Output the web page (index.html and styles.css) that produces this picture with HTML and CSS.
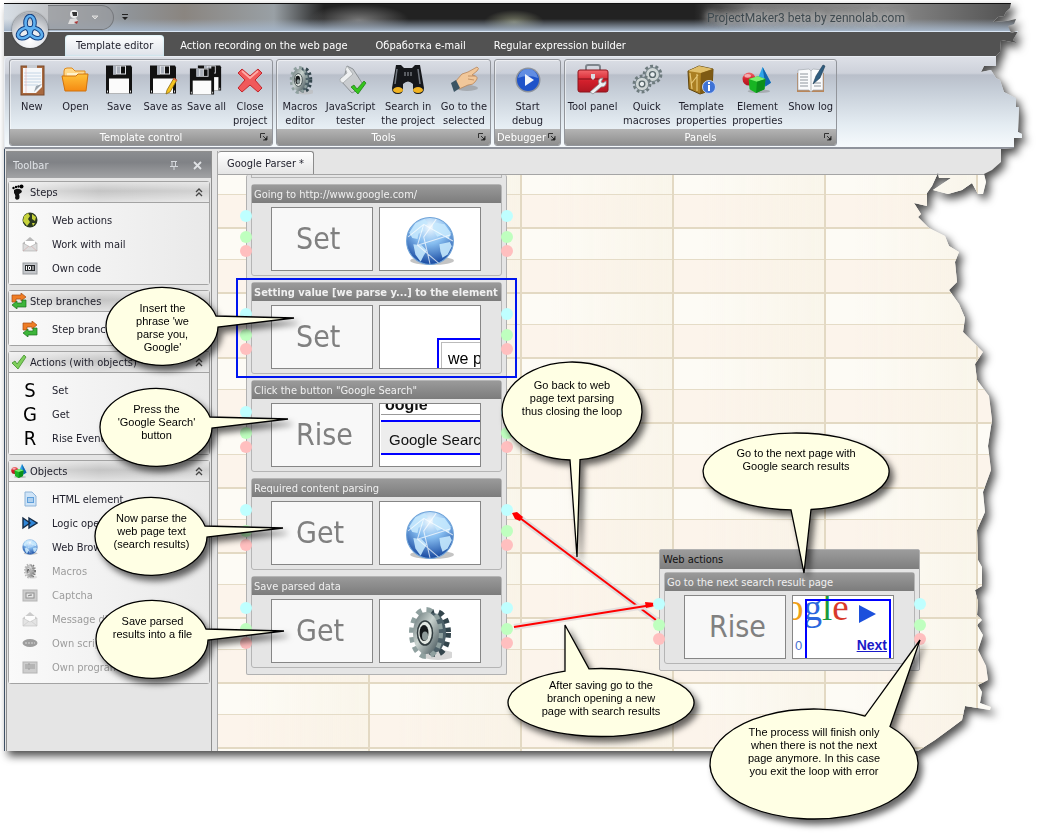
FILE: index.html
```html
<!DOCTYPE html>
<html lang="en">
  <head>
    <meta charset="UTF-8" />
    <meta name="viewport" content="width=device-width, initial-scale=1.0" />
    <title>ProjectMaker3 beta by zennolab.com</title>
    <link rel="stylesheet" href="styles.css">
  </head>
  <body>
    <!-- shared icons -->
    <svg class="defs" width="0" height="0" aria-hidden="true">
      <defs>
        <radialGradient id="globeFill" cx="50%" cy="20%" r="80%">
          <stop offset="0" stop-color="#f2faff" />
          <stop offset="0.45" stop-color="#86bdf0" />
          <stop offset="1" stop-color="#1748a0" />
        </radialGradient>
        <linearGradient id="gearFill" x1="0" y1="0" x2="1" y2="1">
          <stop offset="0" stop-color="#5d6d70" />
          <stop offset="0.45" stop-color="#c9d3cf" />
          <stop offset="1" stop-color="#39494f" />
        </linearGradient>
        <linearGradient id="redFill" x1="0" y1="0" x2="0" y2="1">
          <stop offset="0" stop-color="#f2686c" />
          <stop offset="0.5" stop-color="#d3202c" />
          <stop offset="1" stop-color="#b01722" />
        </linearGradient>
        <linearGradient id="orangeFill" x1="0" y1="0" x2="0" y2="1">
          <stop offset="0" stop-color="#ffc23a" />
          <stop offset="1" stop-color="#f58a12" />
        </linearGradient>
        <symbol id="globe" viewBox="0 0 48 48">
          <ellipse cx="26" cy="43" rx="21" ry="4" fill="#8a8a8a" opacity=".5" />
          <circle cx="24" cy="24" r="22.5" fill="url(#globeFill)" stroke="#6fa3d8" stroke-width="1" />
          <path d="M4 16 L10 7 L19 3 L22 7 L17 10 L19 14 L13 17 L12 22 L7 21 Z M8 27 L16 28 L21 33 L18 38 L15 44 L10 37 Z M27 6 L38 8 L44 16 L42 22 L36 18 L31 20 L27 14 Z M33 27 L43 25 L45 29 L41 37 L36 40 L34 34 Z" fill="#c5e8fd" opacity=".9" />
          <path d="M3 20 L18 8 L46 24 M18 8 L12 28 L32 45 M12 28 L44 18 M30 3 L18 20 L24 46" fill="none" stroke="#fff" stroke-width="1" opacity=".7" />
        </symbol>
        <symbol id="gear" viewBox="0 0 44 56">
          <ellipse cx="30" cy="50" rx="17" ry="5" fill="#bbb" opacity=".6" />
          <g stroke="#33454c" stroke-width="8" stroke-dasharray="4.5 4" fill="none">
            <ellipse cx="28" cy="28" rx="11" ry="20" />
          </g>
          <ellipse cx="25" cy="28" rx="13" ry="20" fill="#4d6068" />
          <g stroke="#8fa09f" stroke-width="8" stroke-dasharray="5 4.3" fill="none">
            <ellipse cx="18" cy="28" rx="13" ry="22" />
          </g>
          <ellipse cx="18" cy="28" rx="13" ry="21" fill="url(#gearFill)" />
          <ellipse cx="17" cy="28" rx="7.5" ry="12" fill="#e2e8e3" stroke="#303b3e" stroke-width="1.5" />
          <ellipse cx="16" cy="28" rx="4.5" ry="8" fill="#15191b" />
          <ellipse cx="17" cy="31" rx="3" ry="4.5" fill="#8d9a99" />
        </symbol>
        <symbol id="cog" viewBox="0 0 20 20">
          <circle cx="10" cy="10" r="7.4" fill="none" stroke="#6e7b7e" stroke-width="4" stroke-dasharray="2.6 2.05" />
          <circle cx="10" cy="10" r="6.6" fill="#cfd6d6" stroke="#77858a" stroke-width="1" />
          <circle cx="10" cy="10" r="2.8" fill="#e9eef0" stroke="#58666a" stroke-width="1.3" />
        </symbol>
        <symbol id="floppy" viewBox="0 0 28 30">
          <path d="M1 1 H26 L27 3 V29 H1 Z" fill="#111" />
          <path d="M8 1 H21 V10 H8 Z" fill="#dfe1e6" />
          <path d="M8 1 H11 V10 H8 Z M12 2 h3 v7 h-3 z" fill="#aab0ba" />
          <rect x="16" y="2" width="4" height="7" fill="#111" />
          <rect x="4" y="14" width="20" height="15" fill="#fbfbfb" />
          <rect x="2" y="26" width="1" height="2" fill="#ddd" />
          <rect x="25" y="26" width="1" height="2" fill="#ddd" />
        </symbol>
        <symbol id="shapes" viewBox="0 0 32 30">
          <ellipse cx="18" cy="27" rx="12" ry="2" fill="#777" opacity=".4" />
          <path d="M22 1 L31 18 L25 22 L15 18 Z" fill="#2fa5e8" />
          <path d="M22 1 L31 18 L25 22 Z" fill="#1265ae" />
          <circle cx="7.500" cy="14" r="7" fill="url(#redFill)" />
          <ellipse cx="6" cy="10.500" rx="3.500" ry="2" fill="#fff" opacity=".55" />
          <path d="M7 14 L17 11 L25 14 L24 25 L15 29 L8 25 Z" fill="#18b523" />
          <path d="M7 14 L17 11 L25 14 L16 17 Z" fill="#7bee6d" />
          <path d="M16 17 L25 14 L24 25 L15 29 Z" fill="#0c8f1a" />
        </symbol>
        <symbol id="launcher" viewBox="0 0 8 8">
          <path d="M0.500 5 V0.500 H5 M3 3 L6 6 M7 3 V7 H3" fill="none" stroke="#333" stroke-width="1" />
          <path d="M7 4 V7 H4 Z" fill="#222" />
        </symbol>
        <symbol id="branches" viewBox="0 0 16 16">
          <path d="M1 9 V2 H10 V0 L15 4 L10 8 V6 H5 V9 Z" fill="#ef7d25" stroke="#a74c12" stroke-width=".7" />
          <path d="M15 7 V14 H6 V16 L1 12 L6 8 V10 H11 V7 Z" fill="#3db53a" stroke="#1b6e1c" stroke-width=".7" />
        </symbol>
        <symbol id="chevrons" viewBox="0 0 8 9">
          <path d="M1 4 L4 1 L7 4 M1 8 L4 5 L7 8" fill="none" stroke="#444" stroke-width="1.300" />
        </symbol>
        <symbol id="envelope" viewBox="0 0 16 16">
          <path d="M1 7 L8 1 L15 7 V15 H1 Z" fill="#b9b9b9" />
          <path d="M3 5 H13 V11 H3 Z" fill="#fff" />
          <path d="M1 7 L8 11 L15 7 V15 H1 Z" fill="#dcdcdc" stroke="#a9a9a9" stroke-width=".6" />
          <path d="M1 15 L7 10 M15 15 L9 10" stroke="#d2a9a9" stroke-width=".6" />
        </symbol>
      </defs>
    </svg>

    <div class="sheet">
      <div class="torn-shadow">
        <div class="torn">
          <div class="window">
            <header class="titlebar">
              <div class="quick-access">
                <svg width="14" height="15" viewBox="0 0 14 15"><circle cx="7" cy="4" r="4" fill="#eee" /><path d="M5 2 h5 v4 h-4z" fill="#333" /><path d="M3 9 L9 8 L11 11 L7 14 H1 Z" fill="#ddd" /><path d="M7 12 L11 11 L10 14 Z" fill="#a33" /></svg>
                <svg width="8" height="5" viewBox="0 0 8 5"><path d="M1 1 H7 L4 4 Z" fill="#bbb" stroke="#ddd" /></svg>
              </div>
              <svg class="qa-more" width="6" height="7" viewBox="0 0 6 7"><path d="M0 0 H6 V1 H0 Z M0 3 H6 L3 6 Z" fill="#222" /></svg>
              <span class="app-title">ProjectMaker3 beta by zennolab.com</span>
            </header>
            <button class="orb" aria-label="Application menu">
              <svg width="30" height="30" viewBox="0 0 30 30">
                <g fill="none" stroke="#123f80" stroke-width="4.600">
                  <ellipse cx="15" cy="9" rx="4.500" ry="7" />
                  <ellipse cx="9.500" cy="19" rx="4.500" ry="7" transform="rotate(60 9.500 19)" />
                  <ellipse cx="20.500" cy="19" rx="4.500" ry="7" transform="rotate(-60 20.500 19)" />
                </g>
                <g fill="none" stroke="#5fb0f0" stroke-width="2.600">
                  <ellipse cx="15" cy="9" rx="4.500" ry="7" />
                  <ellipse cx="9.500" cy="19" rx="4.500" ry="7" transform="rotate(60 9.500 19)" />
                  <ellipse cx="20.500" cy="19" rx="4.500" ry="7" transform="rotate(-60 20.500 19)" />
                </g>
              </svg>
            </button>

            <nav class="tabs">
              <button class="tab active">Template editor</button>
              <button class="tab">Action recording on the web page</button>
              <button class="tab" lang="ru">Обработка e-mail</button>
              <button class="tab">Regular expression builder</button>
            </nav>

            <div class="ribbon">
              <section class="ribbon-group group-template">
                <div class="ribbon-buttons">
                  <button class="ribbon-btn">
                    <svg width="32" height="32" viewBox="0 0 32 32"><rect x="5" y="2" width="23" height="29" fill="#a9693f" stroke="#7b4a2b" /><path d="M7 4 H26 V23 L20 29 H7 Z" fill="#f6f8fa" /><path d="M8 9 H25 M8 12 H25 M8 15 H25 M8 18 H25 M8 21 H22" stroke="#b9cbe0" stroke-width=".8" /><path d="M10 4 V29" stroke="#e7b0b0" stroke-width=".6" /><path d="M26 20 L18 28 L20 22 Z" fill="#9aa4ad" /><rect x="11" y="1" width="10" height="3" fill="#c8ccd2" /></svg>
                    <span>New</span>
                  </button>
                  <button class="ribbon-btn">
                    <svg width="32" height="32" viewBox="0 0 32 32"><path d="M5 7 Q5 4 8 4 H13 L16 7 H26 V16 H5 Z" fill="#ffd98a" stroke="#df8a1d" /><path d="M8 9 H24 V15 H8 Z" fill="#fff2c9" /><path d="M3 12 H17 L19 10 H29 L27 27 H6 Z" fill="url(#orangeFill)" stroke="#d0720d" /></svg>
                    <span>Open</span>
                  </button>
                  <button class="ribbon-btn">
                    <svg width="32" height="32" viewBox="0 0 32 32"><use href="#floppy" x="2" y="0" width="28" height="31" /></svg>
                    <span>Save</span>
                  </button>
                  <button class="ribbon-btn">
                    <svg width="32" height="32" viewBox="0 0 32 32"><use href="#floppy" x="2" y="0" width="28" height="31" /><path d="M19 30 L20 26 L27 14 L30 16 L23 28 Z" fill="#f7c51f" stroke="#8a6a10" stroke-width=".8" /><path d="M27 14 L30 16 L29 17 L26 15 Z" fill="#e06060" /></svg>
                    <span>Save as</span>
                  </button>
                  <button class="ribbon-btn">
                    <svg width="34" height="32" viewBox="0 0 34 32"><use href="#floppy" x="8" y="0" width="25" height="28" /><use href="#floppy" x="0" y="3" width="26" height="29" /></svg>
                    <span>Save all</span>
                  </button>
                  <button class="ribbon-btn">
                    <svg width="32" height="32" viewBox="0 0 32 32"><path d="M8 5 L16 12 L24 5 L28 9 L21 16 L28 24 L24 28 L16 21 L8 28 L4 24 L11 16 L4 9 Z" fill="#f0595b" stroke="#c3262d" stroke-linejoin="round" /><path d="M8 7 L16 14 L24 7" stroke="#ffa9a5" stroke-width="2" fill="none" /></svg>
                    <span>Close<br>project</span>
                  </button>
                </div>
                <div class="ribbon-caption">Template control<svg width="8" height="8"><use href="#launcher" /></svg></div>
              </section>

              <section class="ribbon-group group-tools">
                <div class="ribbon-buttons">
                  <button class="ribbon-btn">
                    <svg width="32" height="32" viewBox="0 0 32 32"><use href="#gear" x="5" y="1" width="24" height="30" /></svg>
                    <span>Macros<br>editor</span>
                  </button>
                  <button class="ribbon-btn">
                    <svg width="32" height="32" viewBox="0 0 32 32"><path d="M12 2 L18 5 L29 22 L17 29 L6 17 Q4 13 9 14 Z" fill="#c9cccf" stroke="#8c9195" /><path d="M12 2 Q9 5 12 9 L5 15 Q4 18 8 19 L18 10 Z" fill="#eef0f1" stroke="#9b9fa2" stroke-width=".7" /><path d="M16 23 L19 21 L22 25 L29 17 L31 19 L23 30 Z" fill="#35c41c" stroke="#1a7d10" stroke-width=".7" /></svg>
                    <span>JavaScript<br>tester</span>
                  </button>
                  <button class="ribbon-btn">
                    <svg width="34" height="32" viewBox="0 0 34 32"><path d="M5 1 H10 L13 4 H21 L24 1 H29 L33 24 Q33 30 27 30 Q22 30 22 25 V20 Q17 15 12 20 V25 Q12 30 7 30 Q1 30 1 24 Z" fill="#15171b" /><path d="M6 5 L4 20 M27 5 L29 20" stroke="#71777f" stroke-width="1.500" /><path d="M14 8 v4 M17 8 v4 M20 8 v4" stroke="#9ca1a8" /><ellipse cx="7" cy="26" rx="5" ry="3" fill="#f0b323" /><ellipse cx="27" cy="26" rx="5" ry="3" fill="#f0b323" /></svg>
                    <span>Search in<br>the project</span>
                  </button>
                  <button class="ribbon-btn">
                    <svg width="32" height="32" viewBox="0 0 32 32"><ellipse cx="19" cy="24" rx="11" ry="3" fill="#777" opacity=".4" /><path d="M7 18 L14 10 L20 8 L29 3 Q32 4 29 7 L24 11 Q30 12 29 15 L27 18 Q25 21 20 21 L11 25 Z" fill="#f1c79a" stroke="#b9875a" stroke-width=".8" /><path d="M20 12 L27 12 M20 15 L26 16" stroke="#b9875a" stroke-width=".8" /><path d="M3 19 L8 16 L12 24 L6 28 Z" fill="#3c5564" /></svg>
                    <span>Go to the<br>selected</span>
                  </button>
                </div>
                <div class="ribbon-caption">Tools<svg width="8" height="8"><use href="#launcher" /></svg></div>
              </section>

              <section class="ribbon-group group-debugger">
                <div class="ribbon-buttons">
                  <button class="ribbon-btn">
                    <svg width="32" height="32" viewBox="0 0 32 32"><circle cx="16" cy="16" r="12.500" fill="#8d939c" /><circle cx="16" cy="16" r="11" fill="#1f53c9" /><path d="M6 14 Q8 5 16 5 Q24 5 26 14 Q16 10 6 14 Z" fill="#7ea6ee" opacity=".7" /><path d="M13 10 L22 16 L13 22 Z" fill="#f3f6fb" /></svg>
                    <span>Start<br>debug</span>
                  </button>
                </div>
                <div class="ribbon-caption">Debugger<svg width="8" height="8"><use href="#launcher" /></svg></div>
              </section>

              <section class="ribbon-group group-panels">
                <div class="ribbon-buttons">
                  <button class="ribbon-btn">
                    <svg width="32" height="32" viewBox="0 0 32 32"><path d="M9 6 V3 Q9 1 11 1 H21 Q23 1 23 3 V6" fill="none" stroke="#7f868d" stroke-width="2" /><rect x="1" y="6" width="30" height="22" rx="2" fill="url(#redFill)" stroke="#8d141d" /><path d="M1 15 H31" stroke="#7d1119" /><path d="M14 10 H18 V14 L16 16 L14 14 Z" fill="#d8dbe0" /><path d="M13 28 L22 20 Q20 14 26 14 L24 18 L26 19 L29 17 Q30 23 24 23 L16 30 Z" fill="#eff1f3" stroke="#8a9096" stroke-width=".8" /></svg>
                    <span>Tool panel</span>
                  </button>
                  <button class="ribbon-btn">
                    <svg width="32" height="32" viewBox="0 0 32 32"><use href="#cog" x="11" y="0" width="21" height="21" /><use href="#cog" x="1" y="10" width="20" height="20" /></svg>
                    <span>Quick<br>macroses</span>
                  </button>
                  <button class="ribbon-btn">
                    <svg width="32" height="32" viewBox="0 0 32 32"><path d="M3 7 L14 2 L28 5 L27 26 L15 30 L4 25 Z" fill="#ab7f22" stroke="#5d430d" /><path d="M3 7 L14 2 L28 5 L16 9 Z" fill="#e0bf6c" /><path d="M16 9 L28 5 L27 26 L15 30 Z" fill="#7e5a14" /><path d="M5 9 L7 25 M12 10 L12 27 M6 20 L13 11" stroke="#e5c676" stroke-width="1.200" /><circle cx="24" cy="23" r="6.500" fill="#3e72d6" stroke="#c3d3f2" /><path d="M24 21 V27 M24 18 V20" stroke="#fff" stroke-width="2" /></svg>
                    <span>Template<br>properties</span>
                  </button>
                  <button class="ribbon-btn">
                    <svg width="32" height="32"><use href="#shapes" x="1" y="2" width="30" height="28" /></svg>
                    <span>Element<br>properties</span>
                  </button>
                  <button class="ribbon-btn">
                    <svg width="32" height="32" viewBox="0 0 32 32"><path d="M2 9 H29 V28 H2 Z" fill="#b8865a" /><path d="M3 6 L14 5 L16 7 L18 5 L28 6 V26 H18 L16 28 L14 26 H3 Z" fill="#fafbfc" stroke="#a5abb2" stroke-width=".7" /><path d="M5 10 H13 M5 13 H13 M5 16 H13 M5 19 H13 M5 22 H13 M19 19 H26 M19 22 H26" stroke="#8e959c" /><path d="M16 7 V27" stroke="#b5bac0" /><path d="M18 20 L21 12 L28 1 L30 2 L25 14 Z" fill="#2f5d80" stroke="#1d3b52" stroke-width=".6" /></svg>
                    <span>Show log</span>
                  </button>
                </div>
                <div class="ribbon-caption">Panels<svg width="8" height="8"><use href="#launcher" /></svg></div>
              </section>
            </div>

            <div class="workspace">
              <aside class="sidebar">
                <div class="sidebar-title">
                  <span>Toolbar</span>
                  <svg width="8" height="9" viewBox="0 0 8 9"><path d="M1 .5 H7 M2 0 V5 M5.500 0 V5 M0 5.500 H8 M4 5 V9" stroke="#d5d8dc" fill="none" /></svg>
                  <svg width="9" height="9" viewBox="0 0 9 9"><path d="M1 1 L8 8 M8 1 L1 8" stroke="#e0e2e5" stroke-width="1.800" /></svg>
                </div>

                <section class="tool-group">
                  <h2 class="tool-head">
                    <svg width="16" height="16" viewBox="0 0 16 16"><path d="M3 6 Q8 3 11 7 Q11 9 8 10 Q9 13 8 15 Q5 17 4 14 Q5 11 3 9 Z" fill="#111" /><circle cx="2.500" cy="4" r="1.200" /><circle cx="5" cy="3" r="1.200" /><circle cx="7.500" cy="2.500" r="1.200" /><circle cx="10.500" cy="2.500" r="2" /></svg>
                    <span>Steps</span>
                    <svg class="fold" width="8" height="9"><use href="#chevrons" /></svg>
                  </h2>
                  <div class="tool-list">
                    <button class="tool"><svg width="16" height="16" viewBox="0 0 16 16"><circle cx="8" cy="8" r="7.500" fill="#2b3a22" /><path d="M2 4 L6 1 L8 4 L6 7 L8 10 L5 14 L1 9 Z M10 2 L14 5 L13 9 L10 7 Z M10 11 L13 11 L11 14 Z" fill="#c7d33c" /></svg>Web actions</button>
                    <button class="tool"><svg width="16" height="16"><use href="#envelope" /></svg>Work with mail</button>
                    <button class="tool"><svg width="16" height="16" viewBox="0 0 16 16"><rect x="1" y="3" width="14" height="11" fill="#c3c6ca" stroke="#9a9da1" /><rect x="3" y="5" width="10" height="6" fill="#26292c" /><path d="M4.500 6 v4 M6.500 6.500 h2 v3 h-2 z M11 6 v4" stroke="#fff" fill="none" /></svg>Own code</button>
                  </div>
                </section>

                <section class="tool-group">
                  <h2 class="tool-head">
                    <svg width="16" height="16"><use href="#branches" /></svg>
                    <span>Step branches</span>
                    <svg class="fold" width="8" height="9"><use href="#chevrons" /></svg>
                  </h2>
                  <div class="tool-list">
                    <button class="tool"><svg width="16" height="16"><use href="#branches" /></svg>Step branch</button>
                  </div>
                </section>

                <section class="tool-group">
                  <h2 class="tool-head">
                    <svg width="16" height="16" viewBox="0 0 16 16"><path d="M1 9 L4 7 L6 10 L13 1 L15 3 L7 15 Z" fill="#7fcf5c" stroke="#3f8f2b" stroke-width=".8" /></svg>
                    <span>Actions (with objects)</span>
                    <svg class="fold" width="8" height="9"><use href="#chevrons" /></svg>
                  </h2>
                  <div class="tool-list">
                    <button class="tool"><b class="letter">S</b>Set</button>
                    <button class="tool"><b class="letter">G</b>Get</button>
                    <button class="tool"><b class="letter">R</b>Rise Event</button>
                  </div>
                </section>

                <section class="tool-group">
                  <h2 class="tool-head">
                    <svg width="16" height="16"><use href="#shapes" /></svg>
                    <span>Objects</span>
                    <svg class="fold" width="8" height="9"><use href="#chevrons" /></svg>
                  </h2>
                  <div class="tool-list">
                    <button class="tool"><svg width="16" height="16" viewBox="0 0 16 16"><path d="M3 1 H10 L14 5 V15 H3 Z" fill="#cfe4f7" stroke="#8fb4d8" /><rect x="5" y="6" width="7" height="6" fill="#5f9fdb" /><path d="M6 8 h5 M6 10 h5" stroke="#fff" /></svg>HTML element</button>
                    <button class="tool"><svg width="16" height="16" viewBox="0 0 16 16"><path d="M1 3 L8 8 L1 13 Z M7 3 L15 8 L7 13 Z" fill="#2f86d8" stroke="#152b45" stroke-width="1.400" /></svg>Logic operation</button>
                    <button class="tool"><svg width="16" height="16"><use href="#globe" /></svg>Web Browser</button>
                    <button class="tool" disabled><svg width="16" height="16"><use href="#gear" /></svg>Macros</button>
                    <button class="tool" disabled><svg width="16" height="16" viewBox="0 0 16 16"><rect x="1" y="3" width="14" height="11" fill="#bbb" stroke="#999" /><rect x="4" y="6" width="8" height="5" fill="#ddd" stroke="#666" /><path d="M6 9 L8 8 L10 8" stroke="#555" /></svg>Captcha</button>
                    <button class="tool" disabled><svg width="16" height="16"><use href="#envelope" /></svg>Message dialog</button>
                    <button class="tool" disabled><svg width="16" height="16" viewBox="0 0 16 16"><ellipse cx="8" cy="8" rx="7.500" ry="4" fill="#777" /><path d="M3 8 H13" stroke="#ccc" stroke-dasharray="2 1" /></svg>Own script</button>
                    <button class="tool" disabled><svg width="16" height="16" viewBox="0 0 16 16"><rect x="1" y="3" width="14" height="11" fill="#bbb" stroke="#999" /><path d="M4 5 v5 M6 5 v5 h2 v-5 z M10 5 v5 M12 5 v5" stroke="#777" fill="none" /></svg>Own program</button>
                  </div>
                </section>
              </aside>

              <main class="editor">
                <div class="doc-tabs">
                  <button class="doc-tab">Google Parser *</button>
                </div>

                <div class="canvas">
                  <div class="node node-main">
                    <div class="step-end"></div>

                    <div class="step">
                      <h3 class="step-title">Going to http://www.google.com/</h3>
                      <div class="step-body">
                        <div class="tile verb">Set</div>
                        <div class="tile picture"><svg width="50" height="50"><use href="#globe" /></svg></div>
                      </div>
                      <div class="ports left"><i></i><i></i><i></i></div>
                      <div class="ports right"><i></i><i></i><i></i></div>
                    </div>

                    <div class="step selected">
                      <h3 class="step-title">Setting value [we parse y...] to the element</h3>
                      <div class="step-body">
                        <div class="tile verb">Set</div>
                        <div class="tile thumb-input"><span>we p</span></div>
                      </div>
                      <div class="ports left"><i></i><i></i><i></i></div>
                      <div class="ports right"><i></i><i></i><i></i></div>
                    </div>

                    <div class="step">
                      <h3 class="step-title">Click the button "Google Search"</h3>
                      <div class="step-body">
                        <div class="tile verb">Rise</div>
                        <div class="tile thumb-search"><span class="cut-line">oogle</span><span class="search-btn">Google Search</span></div>
                      </div>
                      <div class="ports left"><i></i><i></i><i></i></div>
                      <div class="ports right"><i></i><i></i><i></i></div>
                    </div>

                    <div class="step">
                      <h3 class="step-title">Required content parsing</h3>
                      <div class="step-body">
                        <div class="tile verb">Get</div>
                        <div class="tile picture"><svg width="50" height="50"><use href="#globe" /></svg></div>
                      </div>
                      <div class="ports left"><i></i><i></i><i></i></div>
                      <div class="ports right"><i></i><i></i><i></i></div>
                    </div>

                    <div class="step">
                      <h3 class="step-title">Save parsed data</h3>
                      <div class="step-body">
                        <div class="tile verb">Get</div>
                        <div class="tile picture"><svg width="44" height="56"><use href="#gear" /></svg></div>
                      </div>
                      <div class="ports left"><i></i><i></i><i></i></div>
                      <div class="ports right"><i></i><i></i><i></i></div>
                    </div>
                  </div>

                  <div class="node node-next">
                    <h3 class="node-title">Web actions</h3>
                    <div class="step">
                      <h3 class="step-title">Go to the next search result page</h3>
                      <div class="step-body">
                        <div class="tile verb">Rise</div>
                        <div class="tile thumb-next">
                          <span class="logo"><i class="o">o</i><i class="g">g</i><i class="l">l</i><i class="e">e</i></span>
                          <svg class="play" width="17" height="18" viewBox="0 0 17 18"><path d="M0 0 L17 9 L0 18 Z" fill="#1c50dc" /></svg>
                          <span class="page-no">0</span>
                          <span class="frame"></span>
                          <span class="next">Next</span>
                        </div>
                      </div>
                      <div class="ports left"><i></i><i></i><i></i></div>
                      <div class="ports right"><i></i><i></i><i></i></div>
                    </div>
                  </div>

                  <!-- links between steps -->
                  <svg class="links" width="700" height="560" viewBox="0 0 700 560">
                    <path d="M438 445 L298 340" stroke="#dedede" stroke-width="6" />
                    <path d="M438 445 L298 340" stroke="#f00" stroke-width="2" />
                    <path d="M294 338 L299 337 L305 342 L302 346 L297 344 Z" fill="#f00" />
                    <path d="M296 452 L434 430" stroke="#e6e0de" stroke-width="6" />
                    <path d="M296 452 L434 430" stroke="#f00" stroke-width="2" />
                    <path d="M427 427 L437 428 L437 431 L428 433 Z" fill="#f00" />
                  </svg>
                </div>
              </main>
            </div>
          </div>
        </div>
      </div>

      <!-- callouts -->
      <div class="callout c-insert">
        <svg width="113" height="78"><path d="M110 28 A56 39 0 1 0 112 39 L188 30 Z" /></svg>
        <p>Insert the<br>phrase 'we<br>parse you,<br>Google'</p>
      </div>
      <div class="callout c-press">
        <svg width="113" height="78"><path d="M110 28 A56 39 0 1 0 112 39 L188 30 Z" /></svg>
        <p>Press the<br>'Google Search'<br>button</p>
      </div>
      <div class="callout c-parse">
        <svg width="113" height="78"><path d="M110 28 A56 39 0 1 0 112 39 L188 30 Z" /></svg>
        <p>Now parse the<br>web page text<br>(search results)</p>
      </div>
      <div class="callout c-save">
        <svg width="113" height="78"><path d="M110 28 A56 39 0 1 0 112 39 L188 30 Z" /></svg>
        <p>Save parsed<br>results into a file</p>
      </div>
      <div class="callout c-loop">
        <svg width="140" height="98"><path d="M68 97.980 A70 49 0 1 1 78 97.680 L75 195 Z" /></svg>
        <p>Go back to web<br>page text parsing<br>thus closing the loop</p>
      </div>
      <div class="callout c-after">
        <svg width="186" height="69"><path d="M57 3.150 A93 34 0 1 0 81 0.780 L57 -43 Z" /></svg>
        <p>After saving go to the<br>branch opening a new<br>page with search results</p>
      </div>
      <div class="callout c-next">
        <svg width="186" height="77"><path d="M88 76.940 A93 38.500 0 1 1 108 76.500 L101 140 Z" /></svg>
        <p>Go to the next page with<br>Google search results</p>
      </div>
      <div class="callout c-finish">
        <svg width="208" height="109"><path d="M155 7.070 A104 55 0 1 0 180 17.460 L210 -69 Z" /></svg>
        <p>The process will finish only<br>when there is not the next<br>page anymore. In this case<br>you exit the loop with error</p>
      </div>
    </div>
  </body>
</html>
```

FILE: styles.css
```css
* {
  margin: 0;
  padding: 0;
  box-sizing: border-box;
}

body {
  background: #fff;
  color: #1e1e2a;
  font-family: "DejaVu Sans Condensed", "DejaVu Sans", sans-serif;
  font-size: 11px;
}

button {
  border: none;
  background: none;
  color: inherit;
  font: inherit;
  cursor: pointer;
}

h2,
h3 {
  font-size: 11px;
  font-weight: normal;
}

.defs {
  position: absolute;
}

.sheet {
  position: relative;
  padding-bottom: 82px;
}

.torn-shadow {
  filter: drop-shadow(4px 5px 4px rgba(0, 0, 0, 0.7));
}

/* ragged right edge */
.torn {
  padding: 3px 0 0 4px;
  clip-path: polygon(
    4px 3px, calc(100% - 26px) 3px, calc(100% - 27px) 8px,
    calc(100% - 31px) 12px, calc(100% - 33px) 16px, calc(100% - 39px) 17px,
    calc(100% - 44px) 22px, calc(100% - 30px) 21px, calc(100% - 21px) 19px,
    calc(100% - 23px) 24px, calc(100% - 29px) 26px, calc(100% - 26px) 33px,
    calc(100% - 19px) 31px, calc(100% - 24px) 40px, calc(100% - 20px) 43px,
    calc(100% - 36px) 40px, calc(100% - 37px) 52px, calc(100% - 41px) 56px,
    calc(100% - 41px) 66px, calc(100% - 53px) 66px, calc(100% - 56px) 72px,
    calc(100% - 46px) 70px, calc(100% - 41px) 78px, calc(100% - 37px) 80px,
    calc(100% - 33px) 92px, calc(100% - 21px) 98px, calc(100% - 21px) 107px,
    calc(100% - 18px) 107px, calc(100% - 19px) 132px, calc(100% - 15px) 134px,
    calc(100% - 15px) 138px, calc(100% - 23px) 138px, calc(100% - 23px) 148px,
    calc(100% - 36px) 149px, calc(100% - 36px) 162px, calc(100% - 45px) 170px,
    calc(100% - 53px) 174px, calc(100% - 51px) 182px, calc(100% - 54px) 194px,
    calc(100% - 59px) 194px, calc(100% - 65px) 183px, calc(100% - 75px) 190px,
    calc(100% - 89px) 194px, calc(100% - 104px) 190px, calc(100% - 86px) 178px,
    calc(100% - 98px) 178px, calc(100% - 99px) 173px, calc(100% - 105px) 186px,
    calc(100% - 110px) 193px, calc(100% - 110px) 206px, calc(100% - 123px) 203px,
    calc(100% - 116px) 214px, calc(100% - 119px) 217px, calc(100% - 108px) 228px,
    calc(100% - 92px) 236px, calc(100% - 88px) 246px, calc(100% - 78px) 252px,
    calc(100% - 82px) 262px, calc(100% - 80px) 282px, calc(100% - 88px) 290px,
    calc(100% - 78px) 304px, calc(100% - 72px) 318px, calc(100% - 74px) 332px,
    calc(100% - 62px) 344px, calc(100% - 54px) 352px, calc(100% - 62px) 364px,
    calc(100% - 60px) 380px, calc(100% - 48px) 396px, calc(100% - 45px) 420px,
    calc(100% - 49px) 446px, calc(100% - 46px) 470px, calc(100% - 54px) 492px,
    calc(100% - 52px) 512px, calc(100% - 60px) 530px, calc(100% - 59px) 560px,
    calc(100% - 55px) 567px, calc(100% - 55px) 586px, calc(100% - 62px) 590px,
    calc(100% - 59px) 602px, calc(100% - 60px) 615px, calc(100% - 55px) 620px,
    calc(100% - 60px) 625px, calc(100% - 54px) 635px, calc(100% - 59px) 650px,
    calc(100% - 51px) 666px, calc(100% - 49px) 680px, calc(100% - 59px) 685px,
    calc(100% - 55px) 692px, calc(100% - 57px) 703px, calc(100% - 46px) 707px,
    calc(100% - 47px) 710px, calc(100% - 72px) 706px, calc(100% - 75px) 720px,
    calc(100% - 87px) 729px, calc(100% - 102px) 740px, calc(100% - 119px) 100%,
    4px 100%
  );
}

.window {
  position: relative;
  background: #e5e5e5;
}

/* title bar */
.titlebar {
  display: flex;
  align-items: center;
  height: 29px;
  padding-left: 44px;
  border-top: 1px solid #111;
  border-bottom: 1px solid #d9e6f4;
  background:
    linear-gradient(to bottom, rgba(170, 186, 204, 0) 55%, #a5b5c8 100%),
    radial-gradient(ellipse 50px 16px at 355px 16px, #777, transparent),
    radial-gradient(ellipse 30px 12px at 510px 18px, #777a66, transparent),
    linear-gradient(to right, #d8dfe6 0, #b9b9bb 60px, #90959a 120px, #8a8580 180px, #99a0a5 270px, #222 320px, #222 690px, #777 750px, #8c8c8c 880px, #555 1000px);
}

.quick-access {
  display: flex;
  align-items: center;
  gap: 10px;
  height: 25px;
  padding: 0 14px 0 19px;
  border: 1px solid #75787c;
  border-left: none;
  border-radius: 0 13px 13px 0;
  background: rgba(150, 152, 156, 0.7);
}

.qa-more {
  margin-left: 8px;
}

.app-title {
  margin-left: auto;
  margin-right: 132px;
  color: #3f4a50;
  font-family: Roboto, sans-serif;
  font-size: 12px;
  text-shadow: 0 0 6px #ccc, 0 0 8px #bbb, 0 0 10px #aaa;
}

.orb {
  position: absolute;
  left: 8px;
  top: 9px;
  width: 36px;
  height: 36px;
  padding: 2px;
  border-radius: 50%;
  background: radial-gradient(circle at 50% 80%, #fff 0, #e4e6ea 40%, #a9adb3 80%, #e9e9e9 100%);
  box-shadow: 0 0 2px #333;
}

/* ribbon tabs */
.tabs {
  display: flex;
  align-items: flex-end;
  height: 24px;
  padding-left: 61px;
  background: #525252;
}

.tab {
  height: 21px;
  padding: 0 14px;
  color: #fff;
}

.tab.active {
  margin-right: 2px;
  padding: 0 11px;
  border-radius: 4px 4px 0 0;
  background: linear-gradient(#fdfeff, #dfe3ea);
  box-shadow: inset 0 0 2px #a8e8f4;
  color: #1e1e2a;
}

/* ribbon */
.ribbon {
  display: flex;
  gap: 3px;
  height: 93px;
  padding: 2px 4px 1px;
  border: 1px solid #e8ecf2;
  border-bottom: 2px solid #8f939c;
  border-radius: 5px 0 0 0;
  background: linear-gradient(#dde0e7 0, #cdd1da 18%, #b9bfca 20%, #c4ccd6 35%, #e4ecf2 75%, #f6fafd 100%);
}

.ribbon-group {
  display: flex;
  flex-direction: column;
  border: 1px solid #92959b;
  border-radius: 3px;
  overflow: hidden;
  box-shadow: inset 1px 1px 0 rgba(255, 255, 255, 0.5);
}

.group-template {
  width: 264px;
}

.group-tools {
  width: 215px;
}

.group-debugger {
  width: 67px;
}

.group-panels {
  width: 273px;
}

.ribbon-buttons {
  display: flex;
  flex: 1;
  justify-content: space-around;
  padding-top: 4px;
}

.ribbon-btn {
  display: flex;
  flex-direction: column;
  align-items: center;
  gap: 4px;
  min-width: 40px;
  line-height: 14px;
  white-space: nowrap;
}

.ribbon-caption {
  display: flex;
  align-items: center;
  justify-content: center;
  height: 16px;
  padding: 0 4px 0 12px;
  background: linear-gradient(#b4b4b4, #8e8e8e);
  color: #fff;
}

.ribbon-caption svg {
  margin-left: auto;
}

.ribbon-caption::before {
  content: "";
  margin-right: auto;
}

.group-debugger .ribbon-caption {
  padding-left: 0;
}

/* workspace */
.workspace {
  display: flex;
  gap: 5px;
  min-height: 602px;
  padding: 2px 0 0 1px;
  border-left: 1px solid #3f5064;
}

.sidebar {
  width: 206px;
  border: 1px solid #8f8f8f;
  border-bottom: none;
  padding: 0 1px;
}

.sidebar-title {
  display: flex;
  align-items: center;
  gap: 15px;
  height: 26px;
  margin: 0 -1px 3px;
  padding: 0 9px 0 6px;
  background: linear-gradient(#8b8d90, #808286 40%, #a2a3a5);
  color: #dfe2e6;
}

.sidebar-title span {
  flex: 1;
}

.tool-group {
  margin-bottom: 5px;
  border: 1px solid #a3a3a3;
  border-radius: 3px;
}

.tool-head {
  display: flex;
  align-items: center;
  gap: 3px;
  height: 21px;
  padding: 0 6px 0 2px;
  border-bottom: 1px solid #a3a3a3;
  background: linear-gradient(to bottom, rgba(255, 255, 255, 0.5), transparent 45%, rgba(255, 255, 255, 0.5)), linear-gradient(to right, #e8e8e8, #c4c4c4 45%, #d2d2d2);
}

.tool-head .fold {
  margin-left: auto;
}

.tool-list {
  padding: 5px 0 4px;
  background: linear-gradient(to right, #fafafa, #e9e9e9);
}

.tool {
  display: flex;
  align-items: center;
  gap: 14px;
  width: 100%;
  height: 24px;
  padding-left: 13px;
  text-align: left;
}

.tool:disabled {
  color: #9c9c9c;
}

.tool:disabled svg {
  filter: grayscale(1);
  opacity: 0.7;
}

.letter {
  width: 16px;
  color: #000;
  font-size: 20px;
  font-weight: normal;
  text-align: center;
}

.editor {
  display: flex;
  flex: 1;
  flex-direction: column;
  border-left: 1px solid #a9a9a9;
}

.doc-tabs {
  height: 24px;
  border-bottom: 1px solid #a5a5a5;
}

.doc-tab {
  height: 23px;
  padding: 0 9px;
  border: 1px solid #8b8b8b;
  border-left: none;
  border-bottom: none;
  border-radius: 3px 3px 0 0;
  background: linear-gradient(#fff, #e5e5e5);
}

/* diagram */
.canvas {
  position: relative;
  flex: 1;
  overflow: hidden;
  background:
    linear-gradient(to right, #e3d9c3 2px, transparent 2px) -2px 0 / 152px 100%,
    linear-gradient(to bottom, transparent 19px, #e5dcc7 19px, #e5dcc7 20px, transparent 20px, transparent 52px, #e3d9c3 52px, #e3d9c3 54px, transparent 54px) 0 0 / 100% 65px,
    linear-gradient(to right, rgba(248, 243, 230, 0) 20%, rgba(248, 243, 230, 0.7)) -2px 0 / 152px 100%,
    linear-gradient(to bottom, #fdfbf5 20px, #fcf4eb 20px, #fcf4eb 53px, #fdfbf5 53px) 0 0 / 100% 65px;
}

.node {
  position: absolute;
  width: 261px;
  border: 1px solid #b1b1b1;
  border-radius: 2px;
  background: #e5e5e5;
}

.node-main {
  left: 28px;
  top: 0;
  display: flex;
  flex-direction: column;
  gap: 6px;
  padding: 0 4px 6px;
  border-top: none;
}

.node-next {
  left: 441px;
  top: 374px;
}

.node-next .step {
  margin: 3px 4px 6px;
}

.node-title {
  height: 19px;
  padding-left: 3px;
  background: linear-gradient(#9c9c9c, #7e7e7e);
  color: #111;
  line-height: 19px;
}

.step-end {
  height: 3px;
  border: 1px solid #b5b5b5;
  border-top: none;
}

.step {
  position: relative;
  height: 92px;
  border: 1px solid #b5b5b5;
  border-radius: 3px;
}

.step-title {
  height: 18px;
  padding-left: 2px;
  overflow: hidden;
  background: linear-gradient(#9a9a9a, #7c7c7c);
  color: #f0f0f0;
  line-height: 19px;
  white-space: nowrap;
}

.step.selected .step-title {
  font-weight: bold;
}

.step.selected::after {
  content: "";
  position: absolute;
  inset: -5px -16px;
  border: 2px solid #0015f0;
}

.step-body {
  display: flex;
  gap: 6px;
  padding: 4px 19px;
}

.tile {
  position: relative;
  width: 102px;
  height: 64px;
  border: 1px solid #868686;
  background: #fff;
  overflow: hidden;
}

.verb {
  padding-left: 24px;
  background: #f8f8f8;
  color: #808080;
  font-size: 30px;
  line-height: 62px;
}

.picture {
  display: flex;
  align-items: center;
  justify-content: center;
  padding-top: 4px;
}

.thumb-input {
  padding: 32px 0 0 57px;
}

.thumb-input span {
  display: block;
  height: 40px;
  padding: 10px 0 0 9px;
  border: 2px solid #00f;
  border-right: none;
  box-shadow: inset 2px 2px 0 #fff, inset 3px 3px 0 #bbb;
  color: #000;
  font: 16px "Liberation Sans", sans-serif;
  white-space: nowrap;
}

.thumb-search {
  padding-left: 1px;
  color: #111;
  font-family: "Liberation Sans", sans-serif;
  white-space: nowrap;
}

.cut-line {
  display: block;
  height: 11px;
  padding-left: 4px;
  border-bottom: 1px solid #999;
  font-size: 16px;
  font-weight: bold;
  line-height: 1px;
}

.search-btn {
  display: block;
  height: 35px;
  margin-top: 5px;
  padding-left: 8px;
  border-top: 2px solid #00f;
  border-bottom: 2px solid #00f;
  background: #ededed;
  font-size: 15px;
  line-height: 36px;
}

.logo {
  position: absolute;
  left: -8px;
  top: -10px;
  font: 37px "Liberation Serif", serif;
}

.logo i {
  font-style: normal;
}

.logo .o {
  color: #f0a018;
}

.logo .g {
  color: #2b66dd;
}

.logo .l {
  color: #1a9a3a;
}

.logo .e {
  color: #d83a2c;
}

.play {
  position: absolute;
  left: 66px;
  top: 9px;
}

.page-no {
  position: absolute;
  left: 2px;
  bottom: 5px;
  color: #4a70d0;
  font: 13px "Liberation Sans", sans-serif;
}

.frame {
  position: absolute;
  left: 12px;
  top: 3px;
  width: 86px;
  height: 70px;
  border: 2px solid #00f;
}

.next {
  position: absolute;
  right: 6px;
  bottom: 5px;
  color: #1a1ac8;
  font: bold 14px "Liberation Sans", sans-serif;
  text-decoration: underline;
}

.ports {
  position: absolute;
  top: 25px;
  display: flex;
  flex-direction: column;
  z-index: 1;
}

.ports.left {
  left: -12px;
}

.ports.right {
  right: -12px;
}

.ports i {
  width: 12px;
  height: 12px;
  border-radius: 50%;
  background: #ffbfbf;
}

.ports i:first-child {
  margin-bottom: 9px;
  background: #bfffff;
}

.ports i:nth-child(2) {
  margin-bottom: 2px;
  background: #bfffbf;
}

.links {
  position: absolute;
  left: 0;
  top: 0;
  fill: none;
}

/* callouts */
.callout {
  position: absolute;
  color: #000;
  font-family: "Liberation Sans", sans-serif;
  line-height: 13px;
  text-align: center;
}

.callout svg {
  display: block;
  overflow: visible;
  filter: drop-shadow(4px 5px 3px rgba(0, 0, 0, 0.6));
}

.callout path {
  fill: #ffffe4;
  stroke: #000;
  stroke-width: 1.3;
}

.callout p {
  position: absolute;
  top: 14px;
  width: 100%;
}

.c-insert {
  left: 106px;
  top: 288px;
}

.c-press {
  left: 100px;
  top: 389px;
}

.c-parse {
  left: 95px;
  top: 498px;
}

.c-save {
  left: 96px;
  top: 601px;
}

.c-loop {
  left: 502px;
  top: 362px;
}

.c-after {
  left: 508px;
  top: 668px;
}

.c-next {
  left: 703px;
  top: 433px;
}

.c-finish {
  left: 710px;
  top: 709px;
}

.c-loop p,
.c-finish p {
  top: 17px;
}

.c-after p {
  top: 11px;
}
```
